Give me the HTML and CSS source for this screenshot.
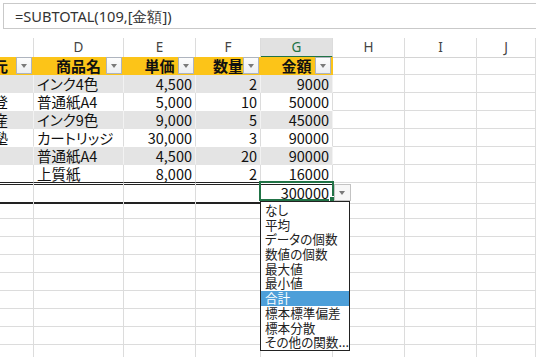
FILE: index.html
```html
<!DOCTYPE html>
<html lang="ja">
<head>
    <meta charset="UTF-8">
    <title>SUBTOTAL</title>
    <link rel="stylesheet" href="styles.css">
</head>
<body>
    <div class="formulaBar">=SUBTOTAL(109,[金額])</div>

    <div class="sheet">
        <!-- column letters -->
        <div class="row colHead">
            <div class="c"></div>
            <div class="c">D</div>
            <div class="c">E</div>
            <div class="c">F</div>
            <div class="c selected">G</div>
            <div class="c">H</div>
            <div class="c">I</div>
            <div class="c">J</div>
        </div>

        <!-- table header -->
        <div class="row">
            <div class="c th clip"><span>元</span><b class="filter"></b></div>
            <div class="c th">商品名<b class="filter"></b></div>
            <div class="c th">単価<b class="filter"></b></div>
            <div class="c th">数量<b class="filter"></b></div>
            <div class="c th">金額<b class="filter"></b></div>
            <div class="c"></div>
            <div class="c"></div>
            <div class="c"></div>
        </div>

        <div class="row">
            <div class="c band clip"></div>
            <div class="c band">インク4色</div>
            <div class="c band num">4,500</div>
            <div class="c band num">2</div>
            <div class="c band num">9000</div>
            <div class="c"></div><div class="c"></div><div class="c"></div>
        </div>
        <div class="row">
            <div class="c plain clip"><span>登</span></div>
            <div class="c plain">普通紙A4</div>
            <div class="c plain num">5,000</div>
            <div class="c plain num">10</div>
            <div class="c plain num">50000</div>
            <div class="c"></div><div class="c"></div><div class="c"></div>
        </div>
        <div class="row">
            <div class="c band clip"><span>産</span></div>
            <div class="c band">インク9色</div>
            <div class="c band num">9,000</div>
            <div class="c band num">5</div>
            <div class="c band num">45000</div>
            <div class="c"></div><div class="c"></div><div class="c"></div>
        </div>
        <div class="row">
            <div class="c plain clip"><span>塾</span></div>
            <div class="c plain">カートリッジ</div>
            <div class="c plain num">30,000</div>
            <div class="c plain num">3</div>
            <div class="c plain num">90000</div>
            <div class="c"></div><div class="c"></div><div class="c"></div>
        </div>
        <div class="row">
            <div class="c band clip"></div>
            <div class="c band">普通紙A4</div>
            <div class="c band num">4,500</div>
            <div class="c band num">20</div>
            <div class="c band num">90000</div>
            <div class="c"></div><div class="c"></div><div class="c"></div>
        </div>
        <div class="row">
            <div class="c plain last clip"></div>
            <div class="c plain last">上質紙</div>
            <div class="c plain last num">8,000</div>
            <div class="c plain last num">2</div>
            <div class="c plain last num">16000</div>
            <div class="c"></div><div class="c"></div><div class="c"></div>
        </div>

        <!-- total row -->
        <div class="row">
            <div class="c total"></div>
            <div class="c total"></div>
            <div class="c total"></div>
            <div class="c total"></div>
            <div class="c total num active">300000
                <div class="cursor"><span class="handle"></span></div>
                <b class="filter totalBtn"></b>
                <ul class="menu">
                    <li>なし</li>
                    <li>平均</li>
                    <li>データの個数</li>
                    <li>数値の個数</li>
                    <li>最大値</li>
                    <li>最小値</li>
                    <li class="on">合計</li>
                    <li>標本標準偏差</li>
                    <li>標本分散</li>
                    <li>その他の関数...</li>
                </ul>
            </div>
            <div class="c"></div><div class="c"></div><div class="c"></div>
        </div>

        <div class="row"><div class="c"></div><div class="c"></div><div class="c"></div><div class="c"></div><div class="c"></div><div class="c"></div><div class="c"></div><div class="c"></div></div>
        <div class="row"><div class="c"></div><div class="c"></div><div class="c"></div><div class="c"></div><div class="c"></div><div class="c"></div><div class="c"></div><div class="c"></div></div>
        <div class="row"><div class="c"></div><div class="c"></div><div class="c"></div><div class="c"></div><div class="c"></div><div class="c"></div><div class="c"></div><div class="c"></div></div>
        <div class="row"><div class="c"></div><div class="c"></div><div class="c"></div><div class="c"></div><div class="c"></div><div class="c"></div><div class="c"></div><div class="c"></div></div>
        <div class="row"><div class="c"></div><div class="c"></div><div class="c"></div><div class="c"></div><div class="c"></div><div class="c"></div><div class="c"></div><div class="c"></div></div>
        <div class="row"><div class="c"></div><div class="c"></div><div class="c"></div><div class="c"></div><div class="c"></div><div class="c"></div><div class="c"></div><div class="c"></div></div>
        <div class="row"><div class="c"></div><div class="c"></div><div class="c"></div><div class="c"></div><div class="c"></div><div class="c"></div><div class="c"></div><div class="c"></div></div>
        <div class="row"><div class="c"></div><div class="c"></div><div class="c"></div><div class="c"></div><div class="c"></div><div class="c"></div><div class="c"></div><div class="c"></div></div>
        <div class="row"><div class="c"></div><div class="c"></div><div class="c"></div><div class="c"></div><div class="c"></div><div class="c"></div><div class="c"></div><div class="c"></div></div>
    </div>
</body>
</html>
```

FILE: styles.css
```css
body, html {
    margin: 0;
    padding: 0;
    height: 100%;
    overflow: hidden;
    background: #fff;
    font-family: "Noto Sans CJK JP", sans-serif;
    font-feature-settings: "palt";
    color: #111;
}
.formulaBar {
    margin: 3px 0 9px 3px;
    height: 26px;
    box-sizing: border-box;
    border: 1px solid #c9c9c9;
    border-right: none;
    padding-left: 11px;
    font-family: "Noto Sans", sans-serif;
    font-size: 14.6px;
    line-height: 24px;
    color: #333;
}
.sheet {
    display: flex;
    flex-direction: column;
}
.row {
    display: grid;
    grid-template-columns: 34px 90px 72px 65px 72px 72px 72px 1fr;
    height: 18px;
}
.c {
    position: relative;
    box-sizing: border-box;
    border-right: 1px solid #dcdcdc;
    border-bottom: 1px solid #dcdcdc;
    padding: 0 3px;
    font-size: 14.5px;
    line-height: 17px;
    white-space: nowrap;
}
.colHead {
    height: 19px;
}
.colHead .c {
    text-align: center;
    font-family: "Noto Sans", sans-serif;
    font-size: 13.5px;
    line-height: 18px;
    color: #444;
    border-bottom-color: #d4d4d4;
}
.colHead .selected {
    background: #e1e1e1;
    color: #217346;
    border-bottom: 2px solid #217346;
}
.th {
    background: #fcc418;
    border-right-color: #fcc418;
    border-bottom-color: #fcc418;
    font-weight: bold;
    font-size: 15px;
    text-align: center;
}
.band {
    background: #e4e4e4;
    border-right-color: #f2f2f2;
    border-bottom-color: #e4e4e4;
}
.plain {
    border-bottom-color: #fff;
}
.last {
    border-bottom-color: #222;
}
.num {
    text-align: right;
}
.clip {
    display: flex;
    justify-content: flex-end;
    overflow: hidden;
    padding: 0 25px 0 0;
}
.th.clip {
    overflow: visible;
}
.th.clip span {
    display: block;
    width: 9px;
    overflow: hidden;
    direction: rtl;
}
.total {
    border-bottom: 2px solid #222;
    box-shadow: inset 0 1px 0 #fff, inset 0 2px 0 #222;
    line-height: 19px;
}
/* filter buttons */
.filter {
    position: absolute;
    top: 0;
    right: 1px;
    width: 16px;
    height: 17px;
    box-sizing: border-box;
    border: 1px solid #aeb4be;
    background: linear-gradient(#fdfdfd, #eceef1);
}
.filter::after {
    content: '';
    position: absolute;
    left: 4px;
    top: 6px;
    border-left: 3.5px solid transparent;
    border-right: 3.5px solid transparent;
    border-top: 4px solid #7a7a7a;
}
.active {
    overflow: visible;
    z-index: 5;
}
.cursor {
    position: absolute;
    left: -2px;
    top: -2px;
    width: 75px;
    height: 20px;
    box-sizing: border-box;
    border: 2px solid #217346;
}
.handle {
    position: absolute;
    right: -4px;
    bottom: -4px;
    width: 5px;
    height: 5px;
    background: #217346;
    border: 1px solid #fff;
}
.totalBtn {
    top: 1px;
    right: auto;
    left: 73px;
    width: 17px;
    height: 17px;
    border-color: #c3c3c3;
    background: #f7f7f7;
}
.menu {
    position: absolute;
    left: -1px;
    top: 18px;
    width: 90px;
    margin: 0;
    padding: 1px 0 0;
    list-style: none;
    box-sizing: border-box;
    border: 1px solid #222;
    background: #fff;
    text-align: left;
}
.menu li {
    height: 14.7px;
    line-height: 14.7px;
    padding-left: 4px;
    font-size: 12.6px;
    color: #222;
}
.menu li.on {
    background: #4d9fd9;
    color: #fff;
}
```
